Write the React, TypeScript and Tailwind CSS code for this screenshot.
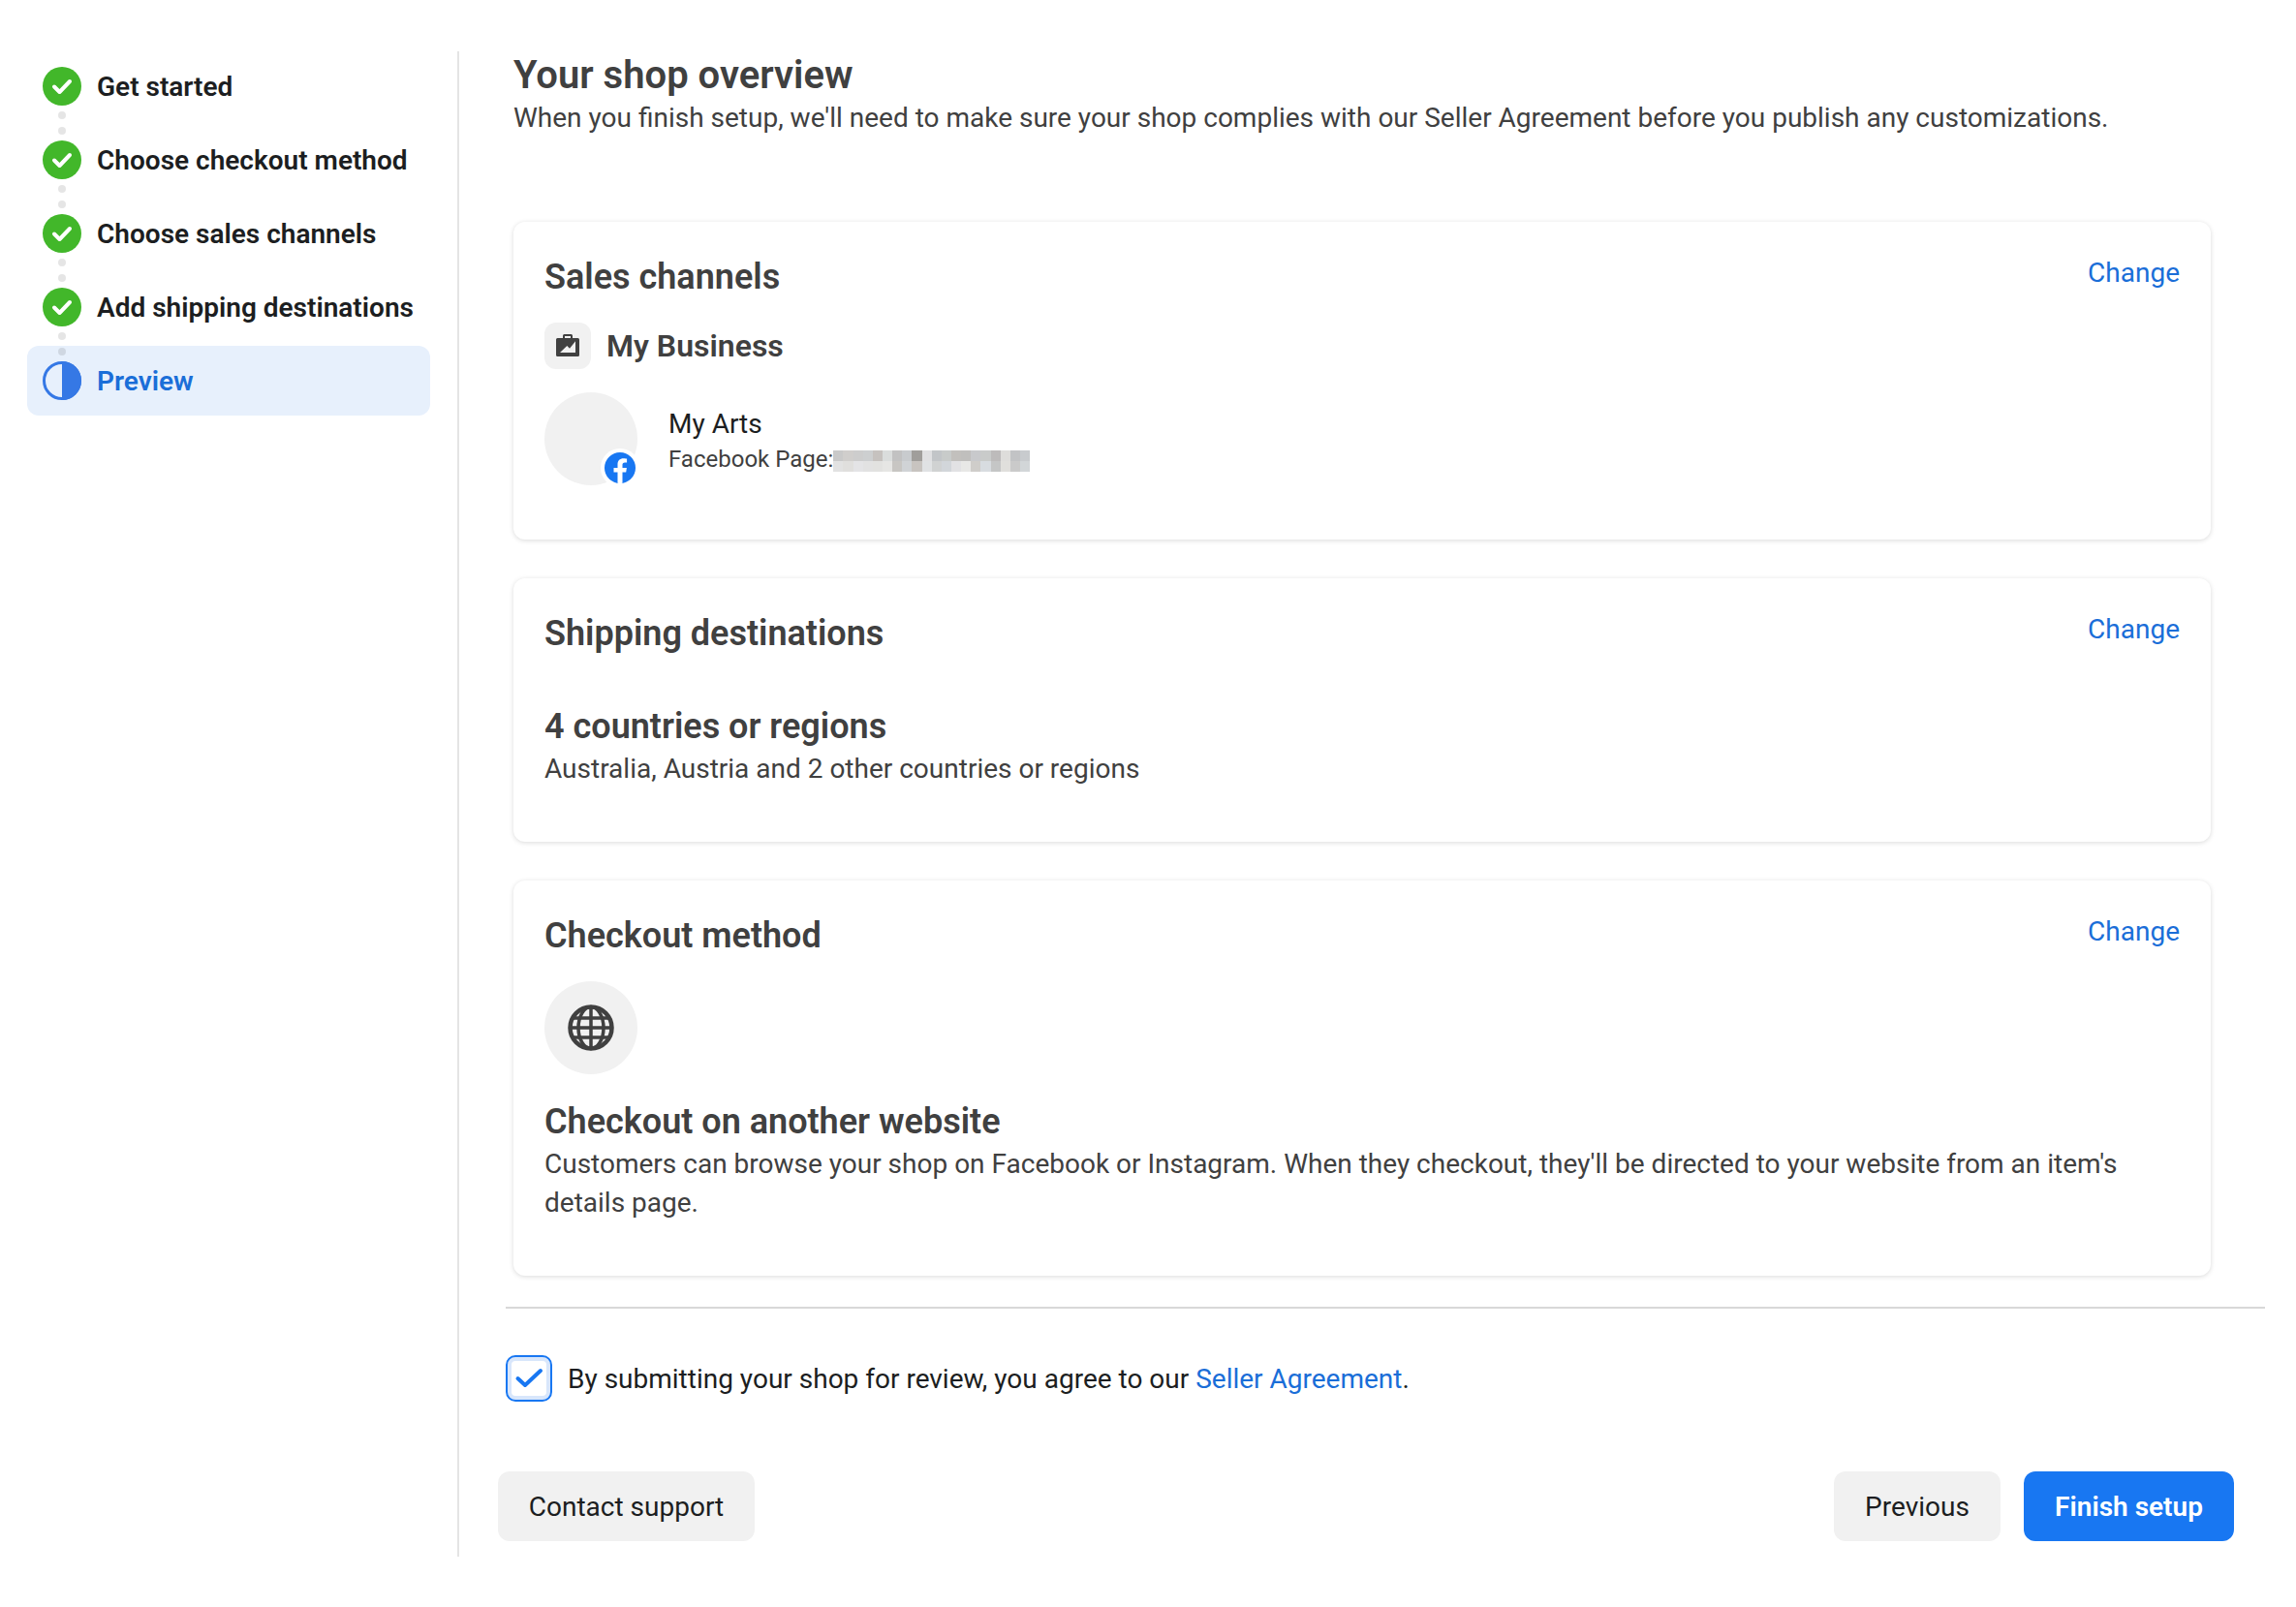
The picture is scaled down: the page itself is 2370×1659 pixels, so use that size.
const steps = ['Get started', 'Choose checkout method', 'Choose sales channels', 'Add shipping destinations'];

const pixelRows = [
  ['#c9c9c9', '#d0cecc', '#cdcdcd', '#cdcfd0', '#c6c2bf', '#dadddc', '#c2c2c2', '#c8cbce', '#a09e9b', '#e0e0e2', '#c2c5c8', '#c8cbca', '#c2c0bd', '#c0bfbd', '#c8c9cc', '#c9cbca', '#bdbbbb', '#dedddb', '#c2c3c5', '#c8cbce'],
  ['#e2e2e2', '#e0dfdd', '#e4e4e6', '#e2e2e2', '#e2e2e0', '#e6e6e4', '#c8c6c3', '#d0d3d6', '#c8c4c0', '#e0e2e4', '#d0d2d2', '#d2d6da', '#e2e2e4', '#e8e8e6', '#cfcdca', '#d8dce0', '#c5c6c6', '#e0dfdc', '#cacaca', '#d2d6d8'],
];

function CheckCircle() {
  return (
    <svg viewBox="0 0 40 40" className="h-10 w-10 shrink-0">
      <circle cx="20" cy="20" r="20" fill="#42b72a" />
      <path d="M12 20.5l5.500 5.500 10.500-11" fill="none" stroke="white" strokeWidth="4" strokeLinecap="round" strokeLinejoin="round" />
    </svg>
  );
}

function HalfCircle() {
  return (
    <svg viewBox="0 0 40 40" className="h-10 w-10 shrink-0">
      <circle cx="20" cy="20" r="18.5" fill="none" stroke="#3578e5" strokeWidth="3" />
      <path d="M20 0a20 20 0 0 1 0 40z" fill="#3578e5" />
    </svg>
  );
}

function Step({ label }: { label: string }) {
  return (
    <div className="relative flex h-[72px] items-center gap-4 pl-4">
      <CheckCircle />
      <span className="pt-[2px] text-[28px] font-semibold text-[#1c1e21]">{label}</span>
      <div className="absolute left-[32px] top-[62px] z-10 h-2 w-2 rounded-full bg-black/10" />
      <div className="absolute left-[32px] top-[78px] z-10 h-2 w-2 rounded-full bg-black/10" />
    </div>
  );
}

function Card({ title, children, className }: { title: string; children: React.ReactNode; className: string }) {
  return (
    <section className={`rounded-xl bg-white px-8 pt-[36px] shadow-[0_1px_5px_rgba(0,0,0,0.15)] ${className}`}>
      <div className="flex items-start justify-between">
        <h2 className="text-[36px] leading-[42px] font-semibold text-[#404040]">{title}</h2>
        <a className="-mt-px text-[28px] leading-[36px] text-[#1a6ed8]">Change</a>
      </div>
      {children}
    </section>
  );
}

export default function App() {
  return (
    <div className="flex h-[1659px] bg-white pt-[53px] font-['Roboto',sans-serif] text-[#1c1e21]">
      <aside className="h-[1554px] w-[474px] shrink-0 border-r-2 border-[#e4e4e4] pl-7">
        <nav className="flex w-[416px] flex-col gap-1">
          {steps.map((s) => (
            <Step key={s} label={s} />
          ))}
          <div className="flex h-[72px] items-center gap-4 rounded-xl bg-[#e7f0fc] pl-4">
            <HalfCircle />
            <span className="pt-[2px] text-[28px] font-semibold text-[#1a6ed8]">Preview</span>
          </div>
        </nav>
      </aside>

      <main className="flex w-[1864px] flex-col pl-10">
        <div className="flex flex-col pl-4 pt-px">
          <h1 className="text-[40px] leading-[48px] font-semibold text-[#404040]">Your shop overview</h1>
          <p className="text-[28px] leading-[40px] text-[#404040]">
            When you finish setup, we'll need to make sure your shop complies with our Seller Agreement before you publish any customizations.
          </p>

          <div className="mt-[87px] flex w-[1752px] flex-col gap-10">
            <Card title="Sales channels" className="h-[328px]">
              <div className="mt-[26px] flex items-center gap-4">
                <div className="h-12 w-12 rounded-xl bg-[#f1f1f1]">
                  <svg viewBox="0 0 48 48" className="h-12 w-12">
                    <path
                      fill="#404040"
                      fillRule="evenodd"
                      d="M20.500 12h7a1.500 1.500 0 0 1 1.500 1.500v2.500h5.500a1.500 1.500 0 0 1 1.500 1.500v16a1.500 1.500 0 0 1-1.500 1.500h-21a1.500 1.500 0 0 1-1.500-1.500v-16a1.500 1.500 0 0 1 1.500-1.500h5.500v-2.500a1.500 1.500 0 0 1 1.500-1.500zM21 14v2h6v-2zM16 31l7.300-7 2.700 2.700 6-7.400v11.700z"
                    />
                  </svg>
                </div>
                <span className="text-[32px] font-semibold text-[#404040]">My Business</span>
              </div>
              <div className="mt-6 flex items-center gap-8">
                <div className="relative h-[96px] w-[96px] rounded-full bg-[#f1f1f1]">
                  <div className="absolute left-[58px] top-[58px] flex h-10 w-10 items-center justify-center rounded-full bg-white">
                    <svg viewBox="0 0 32 32" className="h-8 w-8">
                      <circle cx="16" cy="16" r="16" fill="#1877f2" />
                      <path fill="white" d="M22.200 20.600l.7-4.600h-4.400v-3c0-1.300.6-2.500 2.600-2.500h2v-3.900s-1.800-.3-3.600-.3c-3.600 0-6 2.200-6 6.200v3.500h-4v4.600h4v11.200a16 16 0 0 0 5 0v-11.200z" />
                    </svg>
                  </div>
                </div>
                <div className="flex flex-col pt-[6px]">
                  <span className="text-[28px] leading-[36px]">My Arts</span>
                  <div className="flex items-center">
                    <span className="text-[24px] leading-[36px] text-[#404040]">Facebook Page:</span>
                    <div className="mt-[3px] flex flex-col">
                      {pixelRows.map((row, i) => (
                        <div key={i} className="flex">
                          {row.map((c, j) => (
                            <div key={j} className="h-[11px] w-[10.150px]" style={{ backgroundColor: c }} />
                          ))}
                        </div>
                      ))}
                    </div>
                  </div>
                </div>
              </div>
            </Card>

            <Card title="Shipping destinations" className="h-[272px]">
              <div className="mt-[54px] text-[36px] leading-[42px] font-semibold text-[#404040]">4 countries or regions</div>
              <div className="mt-[3px] text-[28px] leading-[40px] text-[#404040]">Australia, Austria and 2 other countries or regions</div>
            </Card>

            <Card title="Checkout method" className="h-[408px]">
              <div className="mt-[26px] flex h-24 w-24 items-center justify-center rounded-full bg-[#f1f1f1]">
                <svg viewBox="0 0 48 48" className="h-12 w-12" fill="none" stroke="#404040" strokeWidth="3.500">
                  <circle cx="24" cy="24" r="21.500" strokeWidth="4.500" />
                  <ellipse cx="24" cy="24" rx="13" ry="21.500" />
                  <path d="M24 2v44M4 14h40M2 24h44M4 34h40" />
                </svg>
              </div>
              <div className="mt-[28px] text-[36px] leading-[42px] font-semibold text-[#404040]">Checkout on another website</div>
              <p className="mt-[3px] text-[28px] leading-[40px] text-[#404040]">
                Customers can browse your shop on Facebook or Instagram. When they checkout, they'll be directed to your website from an item's details page.
              </p>
            </Card>
          </div>
        </div>

        <div className="mt-[32px] ml-2 h-[2px] w-[1816px] bg-[#d8d8d8]" />

        <div className="mt-[48px] ml-2 flex items-center gap-4">
          <div className="flex h-12 w-12 items-center justify-center rounded-[10px] border-2 border-[#1877f2] shadow-[inset_0_0_0_4px_#d8e6fb]">
            <svg viewBox="0 0 44 44" className="h-11 w-11" fill="none" stroke="#1877f2" strokeWidth="4" strokeLinecap="round" strokeLinejoin="round">
              <path d="M10.500 22l7.500 7 16-15" />
            </svg>
          </div>
          <p className="pt-px text-[28px] text-[#1c1e21]">
            By submitting your shop for review, you agree to our <a className="text-[#1a6ed8]">Seller Agreement</a>.
          </p>
        </div>

        <div className="mt-[72px] flex w-[1792px] items-center justify-between">
          <button className="h-[72px] w-[265px] rounded-xl bg-[#f1f1f1] pt-px text-[28px] text-[#1c1e21]">Contact support</button>
          <div className="flex gap-6">
            <button className="h-[72px] w-[172px] rounded-xl bg-[#f1f1f1] pt-px text-[28px] text-[#1c1e21]">Previous</button>
            <button className="h-[72px] w-[217px] rounded-xl bg-[#1877f2] pt-px text-[28px] font-semibold text-white">Finish setup</button>
          </div>
        </div>
      </main>
    </div>
  );
}
